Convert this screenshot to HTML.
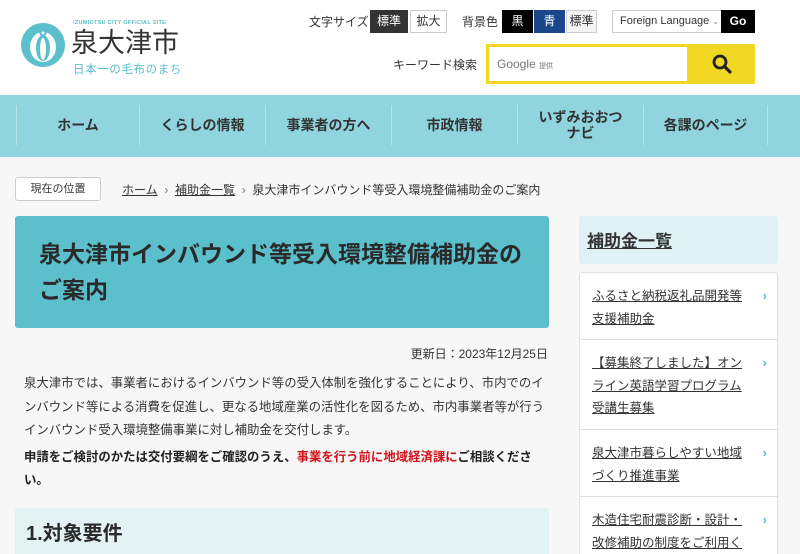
<!DOCTYPE html>
<html style="width:800px;height:554px;overflow:hidden"><head><meta charset="utf-8"><style>
*{margin:0;padding:0;box-sizing:border-box}
body{width:800px;height:554px;overflow:hidden;background:#f7f7f7;font-family:"Liberation Sans","Noto Sans CJK JP",sans-serif;color:#333;position:relative}
.a{position:absolute}
header{position:absolute;left:0;top:0;width:800px;height:95px;background:#fff}
.btn{position:absolute;top:10px;height:23px;font-size:12px;line-height:21px;text-align:center;border:1px solid #ccc}
nav{position:absolute;left:0;top:95px;width:800px;height:62px;background:#8fd4de}
.ni{position:absolute;top:10px;height:40px;border-left:1px solid #b8e3ea;font-size:14px;font-weight:bold;color:#333;display:flex;align-items:center;justify-content:center;text-align:center;line-height:16px}
.it{position:absolute;left:0;width:197px;border-bottom:1px solid #ddd;padding:12px 30px 0 12px;font-size:12.5px;line-height:22.5px;overflow:hidden}
.ch{position:absolute;right:10px;top:12px;color:#5bbfcc;font-size:13px;font-weight:bold}
</style></head><body>
<header>
<svg class="a" style="left:20px;top:22px" width="46" height="46" viewBox="0 0 46 46"><circle cx="23" cy="23" r="22" fill="#5bbfcc"/><ellipse cx="23" cy="25" rx="13" ry="15" fill="#fff"/><ellipse cx="23" cy="26" rx="7" ry="13" fill="#5bbfcc"/><ellipse cx="23" cy="27" rx="3" ry="11" fill="#fff"/><circle cx="23" cy="11" r="3.5" fill="#5bbfcc"/><circle cx="23" cy="11" r="1.5" fill="#fff"/></svg>
<div class="a" style="left:73px;top:20px;font-size:5.5px;font-weight:bold;color:#5bbfcc;letter-spacing:.3px">IZUMIOTSU CITY OFFICIAL SITE</div>
<div class="a" style="left:71px;top:27px;font-size:27px;line-height:32px;color:#333">泉大津市</div>
<div class="a" style="left:73px;top:61px;font-size:11.5px;color:#5bbfcc;letter-spacing:.6px">日本一の毛布のまち</div>
<div class="a" style="left:309px;top:13px;font-size:12px">文字サイズ</div>
<div class="btn" style="left:370px;width:38px;background:#333;color:#fff;border-color:#333">標準</div>
<div class="btn" style="left:410px;width:37px;background:#fff">拡大</div>
<div class="a" style="left:462px;top:13px;font-size:12px">背景色</div>
<div class="btn" style="left:502px;width:31px;background:#000;color:#fff;border-color:#000">黒</div>
<div class="btn" style="left:534px;width:31px;background:#1a468c;color:#fff;border-color:#1a468c">青</div>
<div class="btn" style="left:566px;width:31px;background:#f4f4f4">標準</div>
<div class="btn" style="left:612px;width:110px;background:#fff;text-align:left;padding-left:7px;font-size:11px;white-space:nowrap;overflow:hidden">Foreign Language <span style="font-size:8px;color:#888">&#8964;</span></div>
<div class="btn" style="left:721px;width:34px;background:#000;color:#fff;border-color:#000;font-weight:bold">Go</div>
<div class="a" style="left:393px;top:56px;font-size:12px">キーワード検索</div>
<div class="a" style="left:486px;top:44px;width:269px;height:40px;background:#f0d823"></div>
<div class="a" style="left:489px;top:47px;width:198px;height:34px;background:#fff;font-size:12px;color:#777;padding:8px 8px;line-height:18px">Google <span style="font-size:7px">提供</span></div>
<svg class="a" style="left:711px;top:53px" width="22" height="22" viewBox="0 0 22 22"><circle cx="9" cy="9" r="6" fill="none" stroke="#222" stroke-width="2.8"/><path d="M13.5 13.5L19 19" stroke="#222" stroke-width="3.2" stroke-linecap="round"/></svg>
</header>
<nav>
<div class="ni" style="left:16px;width:123px">ホーム</div>
<div class="ni" style="left:139px;width:126px">くらしの情報</div>
<div class="ni" style="left:265px;width:126px">事業者の方へ</div>
<div class="ni" style="left:391px;width:126px">市政情報</div>
<div class="ni" style="left:517px;width:126px">いずみおおつ<br>ナビ</div>
<div class="ni" style="left:643px;width:125px;border-right:1px solid #b8e3ea">各課のページ</div>
</nav>
<div class="a" style="left:15px;top:177px;width:86px;height:24px;border:1px solid #ccc;border-radius:3px;background:#fff;font-size:11px;text-align:center;line-height:22px">現在の位置</div>
<div class="a" style="left:122px;top:181px;font-size:12px;white-space:nowrap"><u>ホーム</u> <span style="color:#777">&nbsp;›&nbsp;</span> <u>補助金一覧</u> <span style="color:#777">&nbsp;›&nbsp;</span> 泉大津市インバウンド等受入環境整備補助金のご案内</div>
<div class="a" style="left:15px;top:216px;width:534px;height:112px;background:#5bbfcc;border-radius:3px;padding:20px 10px 0 24px;font-size:23px;font-weight:bold;line-height:36px;color:#2a2a2a;white-space:nowrap;overflow:hidden">泉大津市インバウンド等受入環境整備補助金の<br>ご案内</div>
<div class="a" style="left:400px;top:345px;width:148px;text-align:right;font-size:12px">更新日：2023年12月25日</div>
<div class="a" style="left:24px;top:372px;width:524px;font-size:12.4px;line-height:23.5px">泉大津市では、事業者におけるインバウンド等の受入体制を強化することにより、市内でのインバウンド等による消費を促進し、更なる地域産業の活性化を図るため、市内事業者等が行うインバウンド受入環境整備事業に対し補助金を交付します。</div>
<div class="a" style="left:24px;top:446px;width:510px;font-size:12.4px;line-height:23px;font-weight:bold;color:#222">申請をご検討のかたは交付要綱をご確認のうえ、<span style="color:#d0121b">事業を行う前に地域経済課に</span>ご相談ください。</div>
<div class="a" style="left:15px;top:508px;width:534px;height:46px;background:#e2f2f5;border-radius:3px 3px 0 0;padding:9px 11px;font-size:20px;font-weight:bold;color:#2a2a2a;overflow:hidden">1.対象要件</div>
<div class="a" style="left:579px;top:216px;width:199px;height:48px;background:#dff1f4;border-radius:3px;padding:11px 8px;font-size:17px;font-weight:bold"><u>補助金一覧</u></div>
<div class="a" style="left:579px;top:272px;width:199px;height:282px;background:#fff;border:1px solid #e0e0e0;border-bottom:0;border-radius:3px 3px 0 0;overflow:hidden">
<div class="it" style="top:0;height:67px"><u>ふるさと納税返礼品開発等支援補助金</u><span class="ch">›</span></div>
<div class="it" style="top:67px;height:90px"><u>【募集終了しました】オンライン英語学習プログラム受講生募集</u><span class="ch">›</span></div>
<div class="it" style="top:157px;height:67px"><u>泉大津市暮らしやすい地域づくり推進事業</u><span class="ch">›</span></div>
<div class="it" style="top:224px;height:57px;border:0"><u>木造住宅耐震診断・設計・改修補助の制度をご利用く</u><span class="ch">›</span></div>
</div>
</body></html>
